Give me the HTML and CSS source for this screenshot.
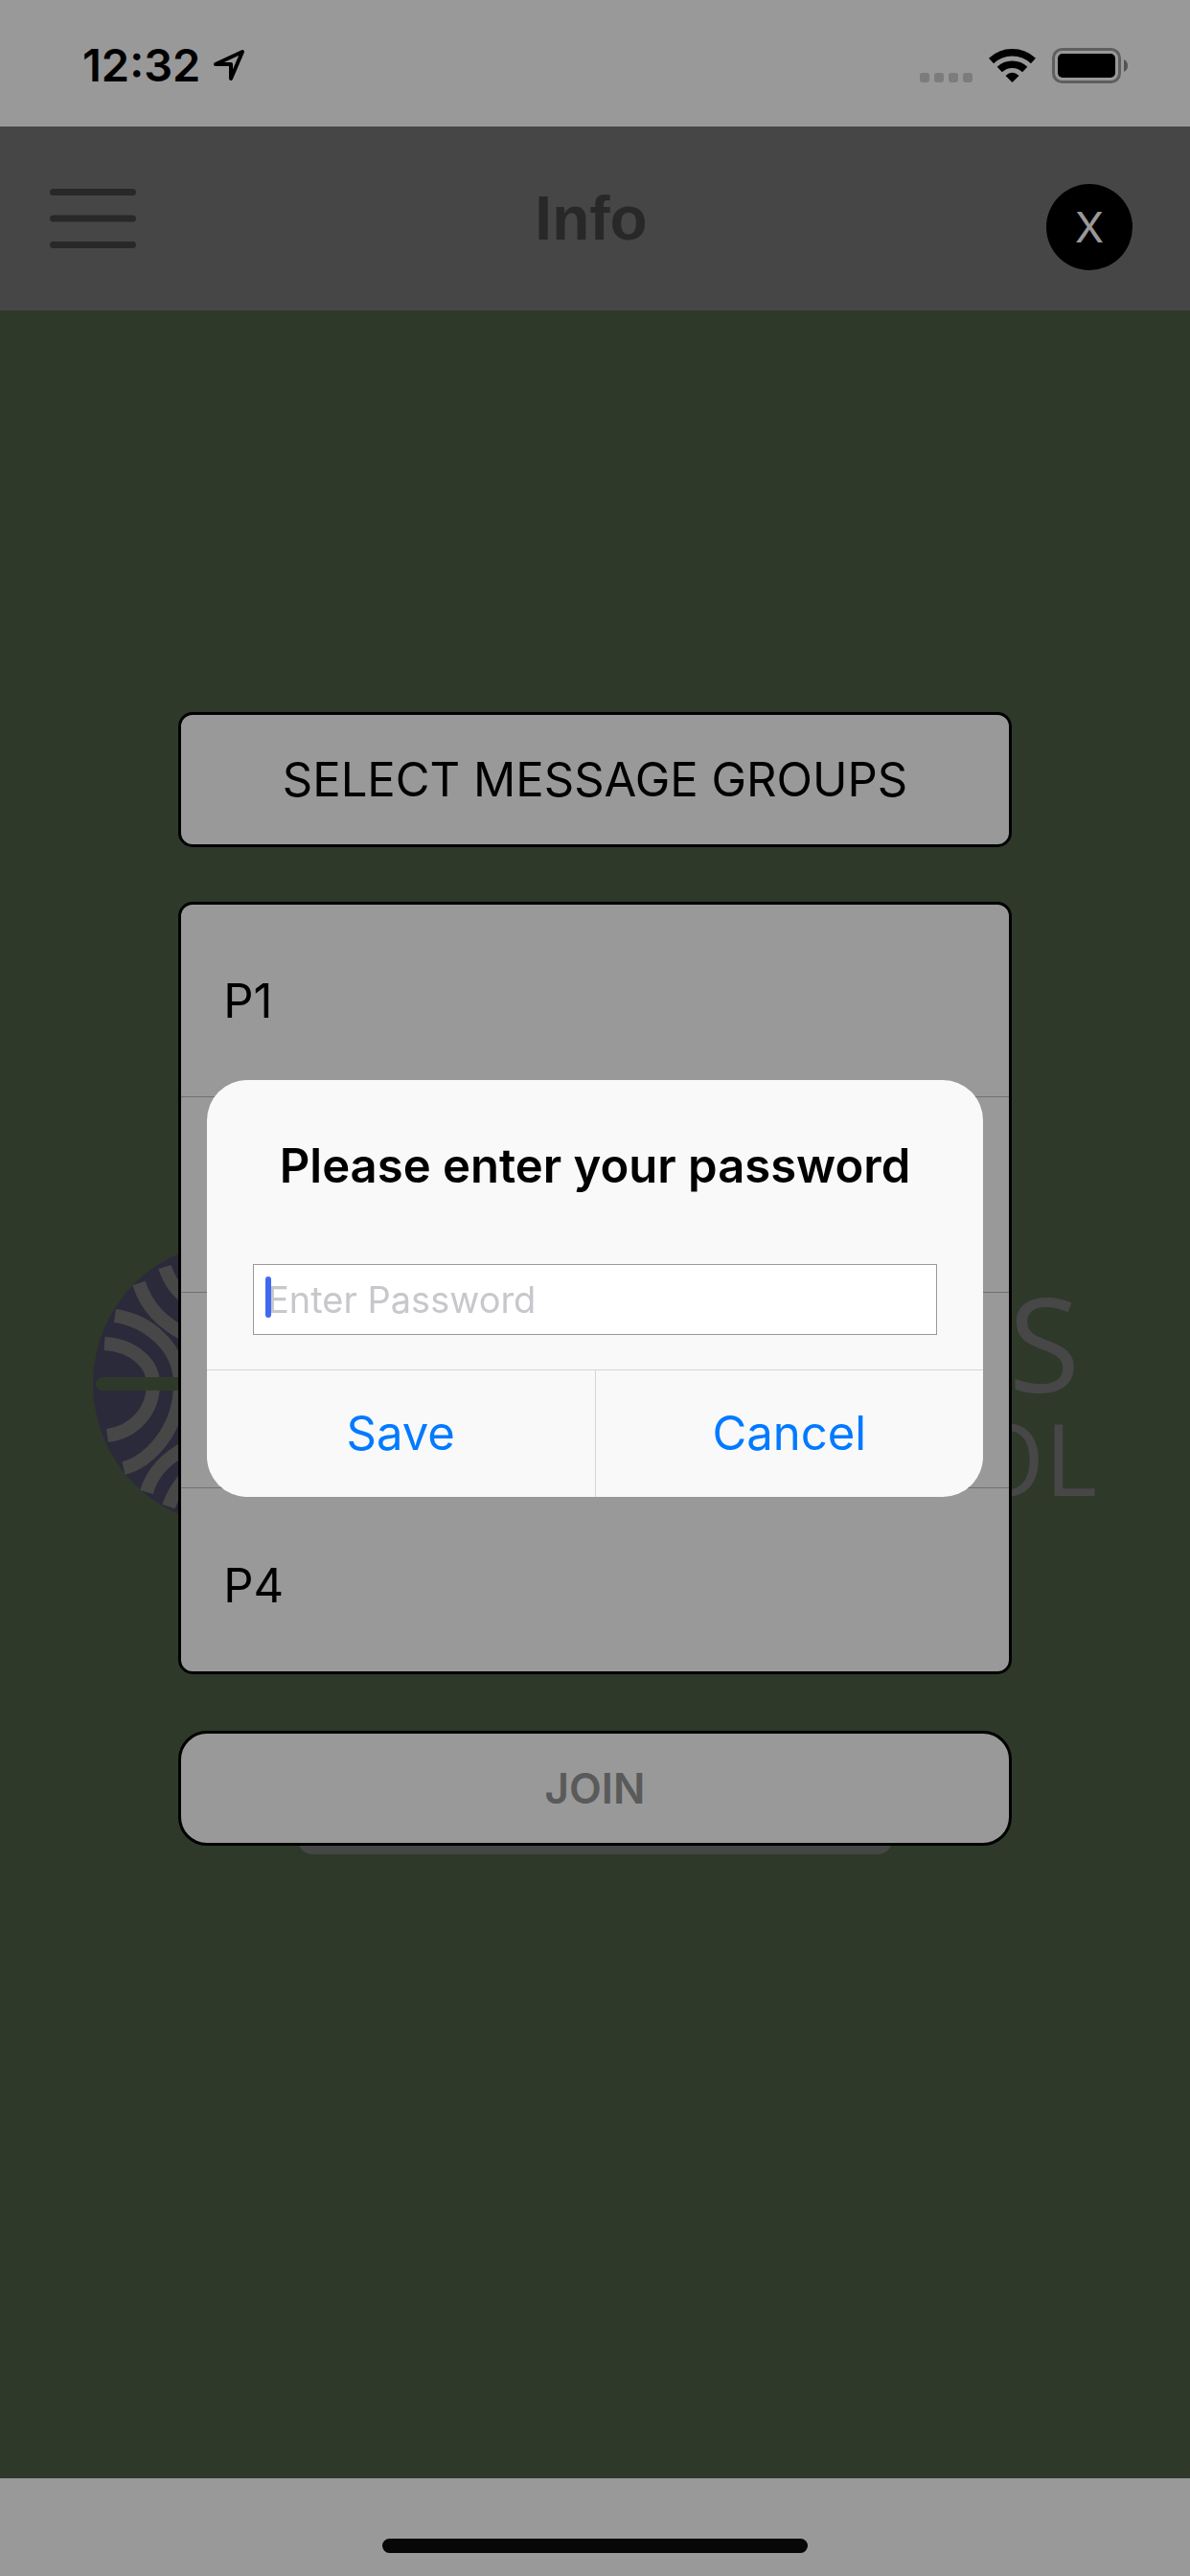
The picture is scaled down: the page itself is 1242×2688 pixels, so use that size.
FILE: index.html
```html
<!DOCTYPE html>
<html lang="en">
<head>
    <meta charset="UTF-8">
    <meta name="viewport" content="width=device-width, initial-scale=1.0">
    <title>Info</title>
    <link rel="stylesheet" href="styles.css">
</head>
<body>
    <div class="status-bar">
        <div class="status-left">
            <span class="time">12:32</span>
            <svg class="location" width="34" height="34" viewBox="0 0 34 34">
                <path d="M3 16 L31 3 L19 31 L19 16 Z" fill="none" stroke="#000" stroke-width="4" stroke-linejoin="round"/>
            </svg>
        </div>
        <div class="status-right">
            <svg width="55" height="37" viewBox="0 0 55 37" fill="#cfcfcf">
                <rect x="0" y="26" width="10" height="10" rx="3"/>
                <rect x="15" y="26" width="10" height="10" rx="3"/>
                <rect x="30" y="26" width="10" height="10" rx="3"/>
                <rect x="45" y="26" width="10" height="10" rx="3"/>
            </svg>
            <svg width="49" height="37" viewBox="0 0 49 37">
                <path d="M2.500 13.500 A32 32 0 0 1 46.500 13.500" fill="none" stroke="#000" stroke-width="7.500"/>
                <path d="M11.300 22.500 A19 19 0 0 1 37.700 22.500" fill="none" stroke="#000" stroke-width="7.500"/>
                <path d="M17.500 29 Q24.500 22.500 31.500 29 L24.500 36 Z"/>
            </svg>
            <svg width="79" height="37" viewBox="0 0 79 37">
                <rect x="1.500" y="1.500" width="69" height="34" rx="9" fill="none" stroke="#9f9f9f" stroke-width="3"/>
                <rect x="6" y="6" width="60" height="25" rx="5"/>
                <path d="M75 12 Q79 14 79 18.500 Q79 23 75 25 Z" fill="#8a8a8a"/>
            </svg>
        </div>
    </div>

    <header class="header">
        <button type="button" class="menu-btn" aria-label="Menu">
            <svg width="90" height="62" viewBox="0 0 90 62" fill="none" stroke="#444" stroke-width="7" stroke-linecap="round">
                <path d="M3.500 3.500 H86.500 M3.500 31 H86.500 M3.500 58.500 H86.500"/>
            </svg>
        </button>
        <h1>Info</h1>
        <button type="button" class="close-btn">X</button>
    </header>

    <main class="content">
        <div class="logo">
            <svg class="logo-badge" width="296" height="296" viewBox="0 0 296 296">
                <circle cx="148" cy="148" r="148" fill="#494661"/>
                <g fill="none" stroke="#777" stroke-width="14">
                    <path d="M12 106 C44 108 63 128 63 148 C63 176 44 198 15 202"/>
                    <path d="M23 77 C58 82 91 110 91 148 C91 196 58 230 32 236"/>
                    <path d="M48 43 C56 68 72 84 98 98"/>
                    <path d="M75 26 C80 42 88 52 104 64"/>
                    <path d="M98 214 C76 226 62 240 56 261"/>
                    <path d="M102 240 C90 252 83 264 79 276"/>
                </g>
                <path d="M10 148 H148" stroke="#4e5f46" stroke-width="14" stroke-linecap="round"/>
            </svg>
            <div class="logo-text">
                <span class="logo-name">S</span>
                <span class="logo-sub">OL</span>
            </div>
        </div>

        <form class="groups">
            <button type="button" class="select-btn">SELECT MESSAGE GROUPS</button>
            <ul class="group-list">
                <li>P1</li>
                <li></li>
                <li></li>
                <li>P4</li>
            </ul>
            <div class="join">
                <button type="button" class="join-btn">JOIN</button>
            </div>
        </form>
    </main>

    <footer class="home-area">
        <div class="home-bar"></div>
    </footer>

    <div class="overlay">
        <form class="dialog" role="dialog" aria-labelledby="dialogTitle">
            <h2 id="dialogTitle"><label for="password">Please enter your password</label></h2>
            <div class="field">
                <input type="password" id="password" name="password" placeholder="Enter Password">
                <span class="caret"></span>
            </div>
            <div class="actions">
                <button type="button">Save</button>
                <button type="button">Cancel</button>
            </div>
        </form>
    </div>
</body>
</html>
```
FILE: styles.css
```css
* {
    box-sizing: border-box;
}
body {
    margin: 0;
    min-height: 100vh;
    display: flex;
    flex-direction: column;
    font-family: Inter, "Liberation Sans", sans-serif;
    background-color: #fff;
    color: #000;
}
button {
    font-family: inherit;
    color: inherit;
    border: none;
    padding: 0;
    cursor: pointer;
}
svg {
    display: block;
}

/* Status bar */
.status-bar {
    display: flex;
    justify-content: space-between;
    align-items: center;
    height: 132px;
    padding: 4px 65px 0 86px;
}
.status-left {
    display: flex;
    align-items: center;
    gap: 13px;
}
.time {
    font-size: 47px;
    line-height: 56px;
    font-weight: 600;
}
.status-right {
    display: flex;
    gap: 17px;
}

/* Header */
.header {
    display: grid;
    grid-template-columns: 1fr auto 1fr;
    align-items: center;
    height: 192px;
    padding: 0 60px 0 52px;
    background-color: #767676;
}
.header h1 {
    margin: 0;
    font-family: "Liberation Sans", Arial, sans-serif;
    font-size: 64px;
    font-weight: 700;
    color: #444;
}
.menu-btn {
    justify-self: start;
    background: none;
}
.close-btn {
    justify-self: end;
    width: 90px;
    height: 90px;
    margin-top: 18px;
    border-radius: 50%;
    background-color: #000;
    color: #fff;
    font-size: 44px;
    font-weight: 400;
}

/* Page content */
.content {
    position: relative;
    flex: 1;
    padding: 419px 15% 0;
    background-color: #4e5f46;
}
.logo {
    position: absolute;
    top: 972px;
    left: 97px;
    right: 97px;
    display: flex;
    justify-content: space-between;
}
.logo-text {
    display: flex;
    flex-direction: column;
    align-items: flex-end;
    padding-top: 30px;
    font-family: "Open Sans", sans-serif;
    color: #777;
}
.logo-name {
    padding-right: 18px;
    font-size: 136px;
    line-height: 150px;
    font-weight: 500;
}
.logo-sub {
    font-size: 105px;
    line-height: 90px;
}
.groups {
    position: relative;
}
.select-btn,
.group-list,
.join-btn {
    display: block;
    width: 100%;
    border: 3px solid #000;
    background-color: #fff;
}
.select-btn {
    height: 141px;
    border-radius: 15px;
    font-size: 49px;
}
.group-list {
    height: 806px;
    margin: 57px 0 59px;
    padding: 0;
    border-radius: 15px;
    list-style: none;
    overflow: hidden;
}
.group-list li {
    display: flex;
    align-items: center;
    height: 204px;
    padding-left: 44px;
    border-bottom: 1px solid #bbb;
    font-size: 49px;
}
.group-list li:first-child {
    height: 201px;
}
.join {
    position: relative;
}
/* Panel peeking out below the join button */
.join::before {
    content: "";
    position: absolute;
    left: 125px;
    right: 125px;
    bottom: -9px;
    height: 60px;
    border-radius: 15px;
    background-color: #767676;
}
.join-btn {
    position: relative;
    height: 120px;
    border-radius: 30px;
    font-size: 44px;
    font-weight: 600;
    color: #979797;
}

/* Home indicator */
.home-area {
    display: flex;
    justify-content: center;
    align-items: flex-end;
    height: 102px;
    padding-bottom: 24px;
}
.home-bar {
    width: 444px;
    height: 15px;
    border-radius: 8px;
    background-color: #0d0d0d;
}

/* Password dialog */
.overlay {
    position: fixed;
    inset: 0;
    display: flex;
    justify-content: center;
    align-items: center;
    background-color: rgba(0, 0, 0, 0.4);
}
.dialog {
    width: 810px;
    max-width: 90%;
    border-radius: 42px;
    background-color: #f9f9f9;
    overflow: hidden;
}
.dialog h2 {
    margin: 0;
    padding-top: 60px;
    font-size: 49px;
    line-height: 60px;
    font-weight: 600;
    text-align: center;
}
.field {
    position: relative;
    margin: 72px 48px 36px;
}
.field input {
    display: block;
    width: 100%;
    height: 74px;
    padding: 0 14px;
    border: 1px solid #999;
    border-radius: 0;
    background-color: #fff;
    font-family: inherit;
    font-size: 38px;
}
.field input::placeholder {
    color: #c7c7cc;
    opacity: 1;
}
.caret {
    position: absolute;
    left: 13px;
    top: 13px;
    width: 6px;
    height: 43px;
    border-radius: 3px;
    background-color: #4169ef;
}
.actions {
    display: flex;
    border-top: 1px solid #d5d5d5;
}
.actions button {
    flex: 1;
    height: 132px;
    background: none;
    color: #007aff;
    font-size: 49px;
}
.actions button + button {
    border-left: 1px solid #d5d5d5;
}
```
